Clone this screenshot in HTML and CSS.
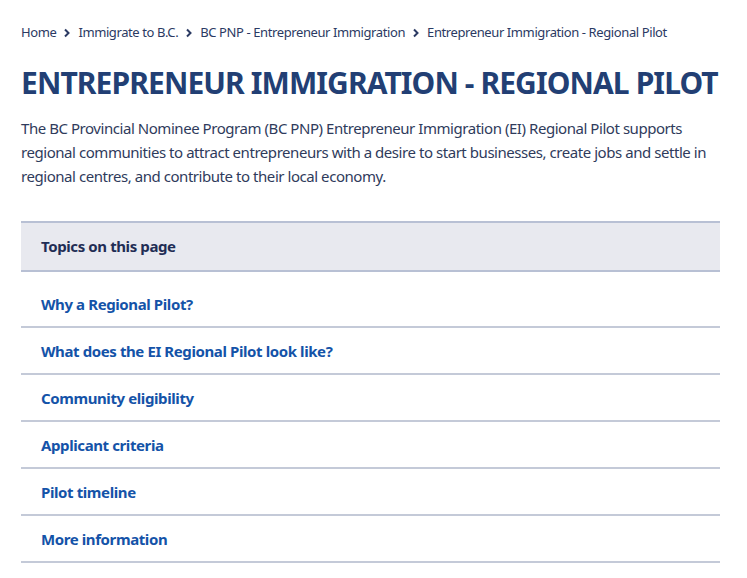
FILE: index.html
```html
<!DOCTYPE html>
<html lang="en">
<head>
<meta charset="utf-8">
<title>Entrepreneur Immigration - Regional Pilot</title>
<link rel="stylesheet" href="styles.css">
</head>
<body>
<main class="page">
  <nav class="breadcrumb" aria-label="Breadcrumb">
    <a href="#">Home</a>
    <svg class="chev" viewBox="0 0 8 10" width="8" height="10"><path d="M2 1.5 L5.5 5 L2 8.5" fill="none" stroke="currentColor" stroke-width="2"/></svg>
    <a href="#">Immigrate to B.C.</a>
    <svg class="chev" viewBox="0 0 8 10" width="8" height="10"><path d="M2 1.5 L5.5 5 L2 8.5" fill="none" stroke="currentColor" stroke-width="2"/></svg>
    <a href="#">BC PNP - Entrepreneur Immigration</a>
    <svg class="chev" viewBox="0 0 8 10" width="8" height="10"><path d="M2 1.5 L5.5 5 L2 8.5" fill="none" stroke="currentColor" stroke-width="2"/></svg>
    <span>Entrepreneur Immigration - Regional Pilot</span>
  </nav>
  <h1 class="title">Entrepreneur Immigration - Regional Pilot</h1>
  <p class="intro">The BC Provincial Nominee Program (BC PNP) Entrepreneur Immigration (EI) Regional Pilot supports regional communities to attract entrepreneurs with a desire to start businesses, create jobs and settle in regional centres, and contribute to their local economy.</p>
  <section class="toc">
    <h2 class="toc-head">Topics on this page</h2>
    <ul class="toc-list">
      <li><a href="#">Why a Regional Pilot?</a></li>
      <li><a href="#">What does the EI Regional Pilot look like?</a></li>
      <li><a href="#">Community eligibility</a></li>
      <li><a href="#">Applicant criteria</a></li>
      <li><a href="#">Pilot timeline</a></li>
      <li><a href="#">More information</a></li>
    </ul>
  </section>
</main>
</body>
</html>
```
FILE: styles.css
```css
* { box-sizing: border-box; }
html, body { margin: 0; padding: 0; background: #fff; }
body {
  font-family: "Noto Sans", "Open Sans", sans-serif;
  color: #2e3a5c;
}
.page { padding: 24px 27px 0 21px; }
.breadcrumb {
  display: flex;
  align-items: center;
  gap: 7px;
  font-size: 13px;
  line-height: 17px;
  letter-spacing: -0.4px;
  color: #2b3a63;
}
.breadcrumb a, .breadcrumb span { color: #2b3a63; text-decoration: none; }
.chev { color: #2b3a63; }
.title {
  margin: 22px 0 0;
  font-size: 30px;
  line-height: 40px;
  font-weight: 700;
  letter-spacing: -0.9px;
  text-transform: uppercase;
  white-space: nowrap;
  color: #223f74;
}
.intro {
  margin: 13px 0 0;
  font-size: 15px;
  line-height: 24px;
  letter-spacing: -0.45px;
  color: #2f3b5c;
}
.toc { margin-top: 33px; }
.toc-head {
  margin: 0;
  background: #e8e9ef;
  border-top: 2px solid #b8c0d4;
  border-bottom: 2px solid #b8c0d4;
  padding: 13px 20px 14px;
  font-size: 15px;
  line-height: 20px;
  font-weight: 700;
  letter-spacing: -0.4px;
  color: #1f2d55;
}
.toc-list { list-style: none; margin: 0; padding: 9px 0 0; }
.toc-list li { border-bottom: 2px solid #c4cad8; }
.toc-list a {
  display: block;
  padding: 13px 20px 12px;
  font-size: 15px;
  line-height: 20px;
  font-weight: 700;
  letter-spacing: -0.4px;
  color: #1453a8;
  text-decoration: none;
}
```
